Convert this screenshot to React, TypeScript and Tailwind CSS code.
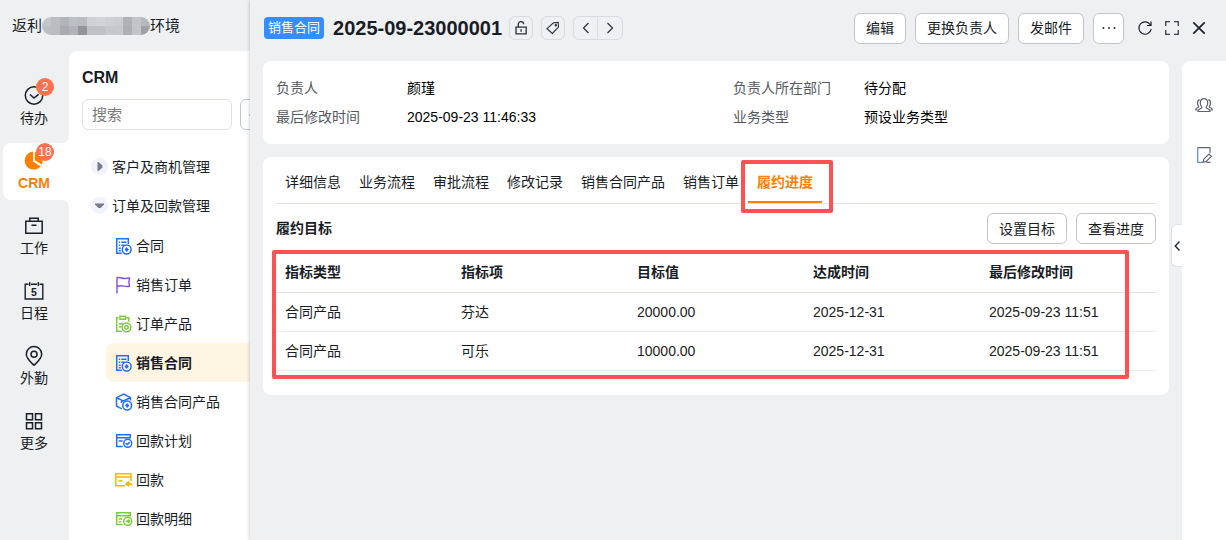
import React from "react";

const treeSvg = {
  width: 18,
  height: 18,
  viewBox: "0 0 18 18",
  fill: "none",
  stroke: "currentColor",
  "aria-hidden": true,
} as const;

/* ---------- navigation icons ---------- */

function TodoIcon() {
  return (
    <svg width="20" height="20" viewBox="0 0 20 20" fill="none" stroke="#1b1f29" strokeWidth="1.5" aria-hidden="true">
      <circle cx="10" cy="10.5" r="8.7" />
      <path d="M6 9.5l4 3.6 4.6-3.8" />
    </svg>
  );
}

function PieIcon() {
  return (
    <svg width="20" height="20" viewBox="0 0 20 20" aria-hidden="true">
      <path d="M9 1.6A9 9 0 1 0 16.6 16.4L9 11.5z" fill="#ff8000" />
      <path d="M10.8 2v8.200l7 4.400A9 9 0 0 0 10.8 2z" fill="#ff8000" />
    </svg>
  );
}

function WorkIcon() {
  return (
    <svg width="20" height="20" viewBox="0 0 20 20" fill="none" stroke="#1b1f29" strokeWidth="1.5" aria-hidden="true">
      <path d="M1.8 6.3h16.4v12H1.8zM5.8 6.3V3.300h8.4v3M7.5 10.300h5" />
    </svg>
  );
}

function CalendarIcon() {
  return (
    <svg width="20" height="20" viewBox="0 0 20 20" fill="none" stroke="#1b1f29" strokeWidth="1.4" aria-hidden="true">
      <path d="M4.5 4.200H1.2V19h17.6V4.200h-3.300M7 4.200h6M5.700 2v4M14.300 2v4" />
      <text x="10" y="15.500" fontSize="10.500" fontWeight="700" fontFamily="Liberation Sans, sans-serif" textAnchor="middle" fill="#1b1f29" stroke="none">
        5
      </text>
    </svg>
  );
}

function PinIcon() {
  return (
    <svg width="20" height="20" viewBox="0 0 20 20" fill="none" stroke="#1b1f29" strokeWidth="1.5" className="overflow-visible" aria-hidden="true">
      <path d="M10 20.300C6 16.500 2.300 13.400 2.300 9.200a7.700 7.700 0 0 1 15.400 0c0 4.200-3.700 7.300-7.700 11.100z" />
      <circle cx="10" cy="9.300" r="3" />
    </svg>
  );
}

function MoreIcon() {
  return (
    <svg width="20" height="20" viewBox="0 0 20 20" fill="none" stroke="#1b1f29" strokeWidth="1.5" className="overflow-visible" aria-hidden="true">
      <path d="M2.500 3.800h6v6h-6zM11.500 3.800h6v6h-6zM2.500 12.800h6v6h-6zM11.500 12.800h6v6h-6z" />
    </svg>
  );
}

/* ---------- tree icons ---------- */

function ContractIcon() {
  return (
    <svg {...treeSvg} className="text-[#1f6fff]" strokeWidth="1.5">
      <path d="M13.300 7V1.700H1.700v14.600h5M3.800 5.200h1.400M6.300 5.200h5.200M3.800 8.200h1.400M6.300 8.200h3M3.800 11.200h2M3.800 13.700h2" />
      <circle cx="11.700" cy="12.500" r="4.400" />
      <path d="M11.700 10.100l2.200 2.400-2.200 2.400-2.200-2.400z" fill="currentColor" stroke="none" />
    </svg>
  );
}

function FlagIcon() {
  return (
    <svg {...treeSvg} className="text-[#8352e0]" strokeWidth="1.400">
      <path d="M2 17.500V1M2 1.700c3-1 5 1 7.500.8 1.800-.1 3.200-.6 5-.6l-.6 4.200.6 4.200c-2 .6-3.800.2-5.500-.2-2.300-.5-4.500-.4-7 .4" />
    </svg>
  );
}

function OrderProductIcon() {
  return (
    <svg {...treeSvg} className="text-[#7ccb3a]" strokeWidth="1.500">
      <path d="M3.500 2.700H1.700v13.600h5M11.500 2.700h2.200v4M5 1.300h5.500v3H5zM4 8.700h4M4 12h2" />
      <circle cx="11.500" cy="12.300" r="4.400" />
      <circle cx="11.500" cy="12.300" r="1.700" />
    </svg>
  );
}

function CubeIcon() {
  return (
    <svg {...treeSvg} className="text-[#1f6fff]" strokeWidth="1.500">
      <path d="M15.500 7.500V4.700L8.700 1.200 1.500 4.700v8.300l5.200 2.800M1.500 4.700l6.800 3.200 7-3.200M6.500 7.300v2.700" />
      <circle cx="12.200" cy="12.500" r="4.400" />
      <path d="M12.200 10.100l2.200 2.400-2.200 2.400-2.200-2.400z" fill="currentColor" stroke="none" />
    </svg>
  );
}

function PlanIcon() {
  return (
    <svg {...treeSvg} className="text-[#1f6fff]" strokeWidth="1.500">
      <path d="M15.300 6.500V2.700H1.700v11.800h6M1.700 5.700h13.600M3.700 9h4" />
      <circle cx="12.700" cy="11.300" r="4" />
      <path d="M10.700 11.100l1.600 1.400 2.500-2.400" />
    </svg>
  );
}

function PaymentIcon() {
  return (
    <svg {...treeSvg} className="text-[#ffb400]" strokeWidth="1.500">
      <path d="M16 10V2.700H.800v12.100H10M.800 6h15.200M3.700 9.800h3.500" />
      <path d="M9.700 13l4.300-3.600v2.100c2.300 0 3.500 1.200 3.800 4-1-1.200-2.100-1.500-3.800-1.500v2z" fill="currentColor" stroke="none" />
    </svg>
  );
}

function PaymentDetailIcon() {
  return (
    <svg {...treeSvg} className="text-[#7ccb3a]" strokeWidth="1.500">
      <path d="M15.300 6.500V2.700H1.700v11.800h6M1.700 5.700h13.600M3.700 9h3.500M3.700 11.700h2.500" />
      <circle cx="12.700" cy="11.300" r="4" />
      <path d="M10.700 11.300h3.600M12.900 9.600l1.700 1.700-1.700 1.700" />
    </svg>
  );
}

/* ---------- header and rail icons ---------- */

function UnlockIcon() {
  return (
    <svg width="14" height="14" viewBox="0 0 14 14" fill="none" stroke="#2a2e38" strokeWidth="1.300" aria-hidden="true">
      <path d="M2 6.200h10.200v6.600H2zM4.300 6.200V3.600a2.700 2.700 0 0 1 5.400-.4M7.100 8.300v2.500" />
    </svg>
  );
}

function TagIcon() {
  return (
    <svg width="14" height="14" viewBox="0 0 14 14" fill="none" stroke="#2a2e38" strokeWidth="1.100" aria-hidden="true">
      <path d="M1 7.700L7.500 1.800l4.700-.4.300 4.700-6.200 6.300z" />
      <circle cx="9.800" cy="4.200" r=".7" />
    </svg>
  );
}

function Chevron({ d }: { d: string }) {
  return (
    <svg width="12" height="12" viewBox="0 0 12 12" fill="none" stroke="#2a2e38" strokeWidth="1.200" aria-hidden="true">
      <path d={d} />
    </svg>
  );
}

function DotsIcon() {
  return (
    <svg width="14" height="14" viewBox="0 0 14 14" fill="#1b1f29" className="shrink-0" aria-hidden="true">
      <circle cx="1.500" cy="7" r=".9" />
      <circle cx="7" cy="7" r=".9" />
      <circle cx="12.500" cy="7" r=".9" />
    </svg>
  );
}

function RefreshIcon() {
  return (
    <svg width="16" height="16" viewBox="0 0 16 16" fill="none" stroke="#1b1f29" strokeWidth="1.200" aria-hidden="true">
      <path d="M13.600 5.200A6.200 6.200 0 1 0 14.200 9M14 1.500v4h-4" />
    </svg>
  );
}

function ExpandIcon() {
  return (
    <svg width="16" height="16" viewBox="0 0 16 16" fill="none" stroke="#3a3e48" strokeWidth="1.300" aria-hidden="true">
      <path d="M6 1.700H1.700V6M10 1.700h4.300V6M6 14.300H1.700V10M10 14.300h4.300V10" />
    </svg>
  );
}

function CloseIcon() {
  return (
    <svg width="16" height="16" viewBox="0 0 16 16" fill="none" stroke="#1b1f29" strokeWidth="1.700" aria-hidden="true">
      <path d="M2.300 2.300l11.400 11.400M13.700 2.300L2.300 13.700" />
    </svg>
  );
}

function PeopleIcon() {
  return (
    <svg width="18" height="18" viewBox="0 0 18 18" fill="none" stroke="#5f646e" strokeWidth="1.200" aria-hidden="true">
      <path d="M3 15.500h12c0-2-1.500-2.600-3.200-3.200-.7-.3-.8-1-.3-1.600.8-1 1.200-2.200 1.200-3.700C12.700 4.600 11.200 2.700 9 2.700S5.300 4.600 5.300 7c0 1.500.4 2.700 1.200 3.700.5.600.4 1.300-.3 1.600C4.500 12.900 3 13.500 3 15.500z" />
      <path d="M4.700 3.600C3.300 4 2.500 5.300 2.500 7c0 1.200.3 2.200 1 3 .4.500.3 1-.3 1.200C1.700 11.800.8 12.500.7 14h1.800M13.300 3.600c1.400.4 2.200 1.700 2.200 3.400 0 1.200-.3 2.200-1 3-.4.500-.3 1 .3 1.200 1.500.6 2.400 1.300 2.500 2.800h-1.800" />
    </svg>
  );
}

function NoteIcon() {
  return (
    <svg width="18" height="18" viewBox="0 0 18 18" fill="none" stroke="#5f646e" strokeWidth="1.200" aria-hidden="true">
      <path d="M15 7V1.700H2.700" />
      <path d="M2.700 1.200v15.100H8" stroke="#5b93d8" strokeWidth="1.300" />
      <path d="M8.200 16.200l.6-3L14 8l2.300 2.300L11.200 15.500zM11.500 16.300h4" />
    </svg>
  );
}

function Caret({ open }: { open: boolean }) {
  return (
    <svg width="17" height="17" viewBox="0 0 17 17" className="shrink-0" aria-hidden="true">
      <circle cx="8.500" cy="8.500" r="8.500" fill="#f0f3fb" />
      <path d={open ? "M4 6.500h9v1L9.500 11h-2L4 7.500z" : "M6.500 4h1L11.500 7.500v2l-4 3.500h-1z"} fill="#737b8c" />
    </svg>
  );
}

/* ---------- data ---------- */

const navItems = [
  { label: "待办", Icon: TodoIcon, badge: "2" },
  { label: "CRM", Icon: PieIcon, badge: "18", active: true },
  { label: "工作", Icon: WorkIcon },
  { label: "日程", Icon: CalendarIcon },
  { label: "外勤", Icon: PinIcon },
  { label: "更多", Icon: MoreIcon },
];

const treeItems = [
  { label: "合同", Icon: ContractIcon },
  { label: "销售订单", Icon: FlagIcon },
  { label: "订单产品", Icon: OrderProductIcon },
  { label: "销售合同", Icon: ContractIcon, active: true },
  { label: "销售合同产品", Icon: CubeIcon },
  { label: "回款计划", Icon: PlanIcon },
  { label: "回款", Icon: PaymentIcon },
  { label: "回款明细", Icon: PaymentDetailIcon },
];

const maskTop = ["bg-[#c4c6c9]", "bg-[#bbbdc1]", "bg-[#b2b4b8]", "bg-[#bdbfc6]", "bg-[#b9bbc1]", "bg-[#d0d1d4]", "bg-[#d3d4d6]", "bg-[#cfd0d3]", "bg-[#cccdd0]", "bg-[#b0b2b6]", "bg-[#c3c5c9]", "bg-[#b7b9bf]"];
const maskBottom = ["bg-[#bdbfc3]", "bg-[#bbbdc1]", "bg-[#a9abb0]", "bg-[#b1b3b8]", "bg-[#929499]", "bg-[#bfc1c5]", "bg-[#bfc1c5]", "bg-[#c7c8cb]", "bg-[#c7c8cb]", "bg-[#adafb3]", "bg-[#c2c4c8]", "bg-[#9fa1a6]"];

const facts = [
  ["负责人", "颜瑾"],
  ["负责人所在部门", "待分配"],
  ["最后修改时间", "2025-09-23 11:46:33"],
  ["业务类型", "预设业务类型"],
];

const tabs = ["详细信息", "业务流程", "审批流程", "修改记录", "销售合同产品", "销售订单", "履约进度"];

const columns = ["指标类型", "指标项", "目标值", "达成时间", "最后修改时间"];

const rows = [
  ["合同产品", "芬达", "20000.00", "2025-12-31", "2025-09-23 11:51"],
  ["合同产品", "可乐", "10000.00", "2025-12-31", "2025-09-23 11:51"],
];

const outlineButton =
  "flex h-[31px] items-center justify-center rounded-md border border-[#c1c5ce] bg-white px-[11px] whitespace-nowrap";
const iconButton = "flex size-6 items-center justify-center rounded-md border border-[#d9dbe0]";

/* ---------- sections ---------- */

function SideNav() {
  return (
    <nav className="flex w-[69px] shrink-0 flex-col gap-2 pt-[27px] pl-[3px]">
      {navItems.map(({ label, Icon, badge, active }) => (
        <a
          key={label}
          href="#"
          className={
            active
              ? "relative flex h-[57px] flex-col items-center gap-[3px] rounded-l-lg bg-white pt-[7px] pr-1 font-bold text-[#ff8000]"
              : "relative flex h-[57px] flex-col items-center gap-[3px] pt-[7px] pr-1"
          }
        >
          <Icon />
          <span className="leading-5">{label}</span>
          {badge && (
            <span className="absolute top-0 left-[33px] flex size-[18px] items-center justify-center rounded-full bg-[#ff7050] text-xs font-normal text-white">
              {badge}
            </span>
          )}
          {active && (
            <>
              <svg className="absolute right-0 bottom-full" width="7" height="7" viewBox="0 0 7 7" aria-hidden="true">
                <path d="M7 0v7H0a7 7 0 0 0 7-7z" fill="#fff" />
              </svg>
              <svg className="absolute top-full right-0" width="7" height="7" viewBox="0 0 7 7" aria-hidden="true">
                <path d="M7 7V0H0a7 7 0 0 1 7 7z" fill="#fff" />
              </svg>
            </>
          )}
        </a>
      ))}
    </nav>
  );
}

function TreePanel() {
  return (
    <aside className="min-w-0 flex-1 overflow-hidden rounded-tl-lg bg-white">
      <h2 className="pt-[17px] pl-[13px] text-base leading-5 font-bold">CRM</h2>
      <div className="flex gap-2 pt-[11px] pl-[13px]">
        <input
          type="text"
          aria-label="搜索"
          placeholder="搜索"
          className="h-[31px] w-[150px] shrink-0 rounded-md border border-[#dfe1e9] bg-white px-[9px] text-[15px] outline-none placeholder:text-[#7a7a7a]"
        />
        <button type="button" aria-label="更多操作" className="flex h-[31px] w-[31px] shrink-0 items-center justify-center rounded-md border border-[#c1c5ce] bg-white">
          <DotsIcon />
        </button>
      </div>
      <ul className="pt-[17px]">
        <li className="flex h-[39px] items-center gap-1 pl-[22px]">
          <Caret open={false} />
          客户及商机管理
        </li>
        <li>
          <div className="flex h-[39px] items-center gap-1 pl-[22px]">
            <Caret open />
            订单及回款管理
          </div>
          <ul className="pt-px pl-[37px]">
            {treeItems.map(({ label, Icon, active }) => (
              <li key={label}>
                <a
                  href="#"
                  className={
                    active
                      ? "flex h-[39px] items-center gap-[3px] rounded-l-lg bg-[#fff5e3] pl-[9px] font-bold whitespace-nowrap"
                      : "flex h-[39px] items-center gap-[3px] pl-[9px] whitespace-nowrap"
                  }
                >
                  <Icon />
                  {label}
                </a>
              </li>
            ))}
          </ul>
        </li>
      </ul>
    </aside>
  );
}

function DrawerHeader() {
  return (
    <header className="flex h-[61px] items-start justify-between pr-[19px] pl-[14px]">
      <div className="flex h-14 items-center">
        <span className="flex h-[22px] items-center rounded-sm bg-[#368dff] px-1 text-[13px] text-white">销售合同</span>
        <h1 className="pl-[9px] text-xl font-bold">2025-09-23000001</h1>
        <button type="button" aria-label="解锁" className={`ml-[7px] ${iconButton}`}>
          <UnlockIcon />
        </button>
        <button type="button" aria-label="标签" className={`ml-2 ${iconButton}`}>
          <TagIcon />
        </button>
        <div className="ml-2 flex h-6 divide-x divide-[#d9dbe0] rounded-md border border-[#d9dbe0]">
          <button type="button" aria-label="上一条" className="flex w-6 items-center justify-center">
            <Chevron d="M8.500 1L3.500 6l5 5" />
          </button>
          <button type="button" aria-label="下一条" className="flex w-6 items-center justify-center">
            <Chevron d="M3.500 1l5 5-5 5" />
          </button>
        </div>
      </div>
      <div className="flex h-14 items-center gap-[9px]">
        <button type="button" className={outlineButton}>编辑</button>
        <button type="button" className={outlineButton}>更换负责人</button>
        <button type="button" className={outlineButton}>发邮件</button>
        <button type="button" aria-label="更多" className="flex size-[31px] items-center justify-center rounded-md border border-[#c1c5ce] bg-white">
          <DotsIcon />
        </button>
        <div className="flex items-center gap-[11px] pl-1">
          <button type="button" aria-label="刷新"><RefreshIcon /></button>
          <button type="button" aria-label="全屏"><ExpandIcon /></button>
          <button type="button" aria-label="关闭"><CloseIcon /></button>
        </div>
      </div>
    </header>
  );
}

function FactsCard() {
  return (
    <dl className="grid grid-cols-2 gap-x-[34px] gap-y-[9px] rounded-lg bg-white px-[13px] py-[17px] leading-5">
      {facts.map(([label, value]) => (
        <div key={label} className="flex">
          <dt className="w-[131px] shrink-0 text-[#545861]">{label}</dt>
          <dd className="text-black">{value}</dd>
        </div>
      ))}
    </dl>
  );
}

function ProgressCard() {
  return (
    <section className="rounded-lg bg-white px-[13px] pb-6">
      <div role="tablist" className="flex h-[47px] border-b border-[#dee1e8]">
        {tabs.map((tab, i) => {
          const active = i === tabs.length - 1;
          return (
            <button
              key={tab}
              type="button"
              role="tab"
              aria-selected={active}
              className={
                active
                  ? "relative border-b-2 border-[#ff8000] px-[9px] pt-1.5 font-bold whitespace-nowrap text-[#ff8000]"
                  : "px-[9px] pt-1 whitespace-nowrap"
              }
            >
              {tab}
              {active && (
                <span className="pointer-events-none absolute top-[3px] -right-[11px] -bottom-3 -left-[7px] rounded-xs border-4 border-[#fd5252]" />
              )}
            </button>
          );
        })}
      </div>
      <div className="flex items-start justify-between pt-[9px]">
        <h2 className="font-bold leading-[31px]">履约目标</h2>
        <div className="flex gap-[9px]">
          <button type="button" className={outlineButton}>设置目标</button>
          <button type="button" className={outlineButton}>查看进度</button>
        </div>
      </div>
      <div className="relative mt-[9px]">
        <table className="w-full table-fixed border-collapse text-left">
          <thead>
            <tr className="h-[39px] border-b border-[#dee1e8]">
              {columns.map((column) => (
                <th key={column} className="px-[9px] font-bold">{column}</th>
              ))}
            </tr>
          </thead>
          <tbody>
            {rows.map((row) => (
              <tr key={row[1]} className="h-[39px] border-b border-[#eaebee]">
                {row.map((cell) => (
                  <td key={cell} className="px-[9px]">{cell}</td>
                ))}
              </tr>
            ))}
          </tbody>
        </table>
        <div className="pointer-events-none absolute -top-[3px] right-[27px] -bottom-2 -left-1 rounded-xs border-4 border-[#fd5252]" />
      </div>
    </section>
  );
}

export default function App() {
  return (
    <div className="flex h-screen overflow-hidden bg-[#eff0f2] font-['Liberation_Sans','Noto_Sans_CJK_SC',sans-serif] text-sm text-[#181c25]">
      <div className="flex w-[250px] shrink-0 flex-col">
        <div className="flex h-[51px] shrink-0 items-center pl-3 text-[15px]">
          返利
          <span className="grid h-[18px] w-[108px] shrink-0 grid-cols-12 grid-rows-2 overflow-hidden rounded-full" aria-hidden="true">
            {[...maskTop, ...maskBottom].map((color, i) => (
              <span key={i} className={color} />
            ))}
          </span>
          环境
        </div>
        <div className="flex min-h-0 flex-1">
          <SideNav />
          <TreePanel />
        </div>
      </div>

      <main className="z-10 flex min-w-0 flex-1 flex-col bg-[#eff0f2] shadow-[-1px_0_3px_rgba(0,0,0,0.16)]">
        <DrawerHeader />
        <div className="flex min-h-0 flex-1 gap-[13px] pl-[13px]">
          <div className="flex min-w-0 flex-1 flex-col gap-[13px]">
            <FactsCard />
            <ProgressCard />
          </div>
          <aside className="relative flex w-11 shrink-0 flex-col items-center gap-8 rounded-tl-lg bg-white pt-[35px]">
            <button type="button" aria-label="团队成员"><PeopleIcon /></button>
            <button type="button" aria-label="跟进记录"><NoteIcon /></button>
            <button
              type="button"
              aria-label="展开侧栏"
              className="absolute top-[163px] -left-[11px] flex h-[43px] w-[11px] items-center justify-center rounded-l-md border-y border-l border-[#dee1e8] bg-white"
            >
              <svg width="8" height="12" viewBox="0 0 8 12" fill="none" stroke="#1b1f29" strokeWidth="1.300" className="shrink-0" aria-hidden="true">
                <path d="M6.500 1.500L2.200 6l4.300 4.500" />
              </svg>
            </button>
          </aside>
        </div>
      </main>
    </div>
  );
}
